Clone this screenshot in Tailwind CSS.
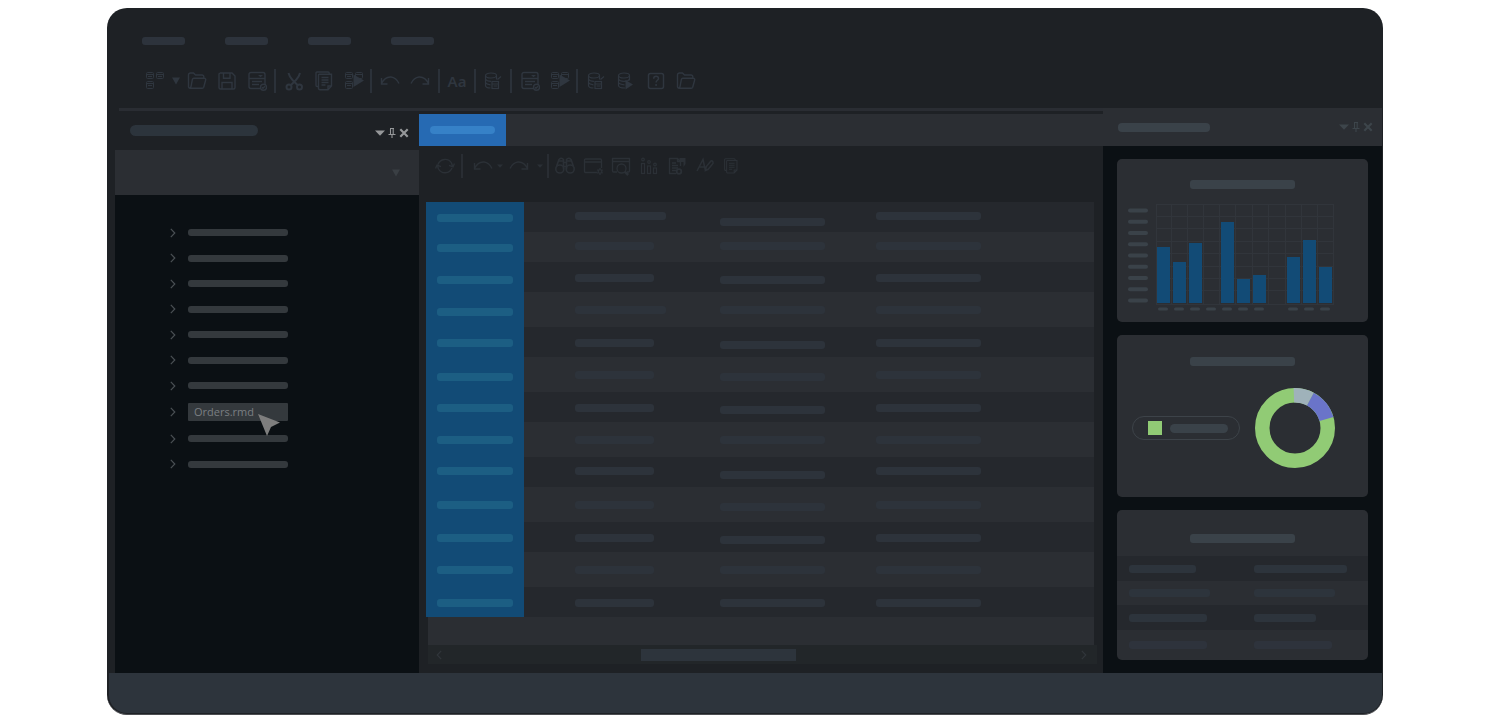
<!DOCTYPE html>
<html lang="en">
<head>
<meta charset="utf-8">
<meta name="viewport" content="width=device-width, initial-scale=1">
<title>Report designer</title>
<script src="https://cdn.jsdelivr.net/npm/@tailwindcss/browser@4"></script>
</head>
<body class="bg-white pt-2 pr-[121px] pl-[107px] font-['Noto_Sans','Open_Sans',sans-serif]">

<svg class="hidden" aria-hidden="true">
  <defs>
    <symbol id="i-tables" viewBox="0 0 20 20"><g fill="none" stroke="currentColor"><rect x="1.500" y="1.500" width="7" height="6" rx="1"/><rect x="11.500" y="1.500" width="7" height="6" rx="1"/><rect x="1.500" y="10.500" width="7" height="7" rx="1"/><path d="M1.500 3.500h7M3 5.500h4M11.500 3.500h7M13 5.500h4M1.500 12.500h7M3 14.500h4"/></g></symbol>
    <symbol id="i-folder" viewBox="0 0 20 20"><path d="M4 17.300H3a1.500 1.500 0 0 1-1.500-1.500V4A2 2 0 0 1 3.500 2h3l2 2h6.500a1.800 1.800 0 0 1 1.800 1.800V7.300M4 17.300h11.300a1.500 1.500 0 0 0 1.400-1l1.900-7a1.400 1.400 0 0 0-1.300-2H6.800a1.500 1.500 0 0 0-1.400 1.100L4 15.500a1.500 1.500 0 0 1-2 1.300" fill="none" stroke="currentColor" stroke-width="1.400"/></symbol>
    <symbol id="i-save" viewBox="0 0 20 20"><path d="M3 2h12l3 3v11.500a1.500 1.500 0 0 1-1.500 1.500h-13A1.500 1.500 0 0 1 2 16.500V3.200A1.200 1.200 0 0 1 3.200 2M6.500 2v5.200h6.500V2M5 18v-6.500h10V18" fill="none" stroke="currentColor" stroke-width="1.400"/></symbol>
    <symbol id="i-form" viewBox="0 0 20 20"><g fill="none" stroke="currentColor" stroke-width="1.400"><path d="M13 17.500H4A2 2 0 0 1 2 15.500v-12A2 2 0 0 1 4 1.500h12a2 2 0 0 1 2 2V13M2 7.500h16M5 10.500h10M5 13.500h7"/><circle cx="16.500" cy="16.300" r="3"/><path d="m15 16.300 1 1 2-2"/></g><path d="M11 4h5L13.500 6.200z" fill="currentColor"/></symbol>
    <symbol id="i-cut" viewBox="0 0 20 20"><g fill="none" stroke="currentColor" stroke-width="2"><circle cx="5" cy="16" r="2.500"/><circle cx="15.500" cy="16" r="2.500"/><path d="M4.500 2q1 4 4 7l5.500 5.500M16 2q-1 4-4 7l-5.500 5.500"/></g></symbol>
    <symbol id="i-copy" viewBox="0 0 20 20"><g fill="none" stroke="currentColor" stroke-width="1.400"><path d="M4 15.500H3.200a1.200 1.200 0 0 1-1.200-1.200V2a1 1 0 0 1 1-1h11a1.200 1.200 0 0 1 1.200 1.200V3"/><path d="M5 3.200h12.500V15L14 18.700H6A1.500 1.500 0 0 1 4.500 17V4.500A1.200 1.200 0 0 1 5 3.200M17.500 15H14v3.500M7.500 6.500h7M7.500 9h7M7.500 11.500h7M7.500 14h4"/></g></symbol>
    <symbol id="i-run" viewBox="0 0 20 20"><g fill="none" stroke="currentColor"><rect x="1.500" y="1.500" width="7" height="6" rx="1"/><rect x="11.500" y="1.500" width="7" height="6" rx="1"/><rect x="1.500" y="10.500" width="7" height="7" rx="1"/><path d="M1.500 3.500h7M3 5.500h4M1.500 12.500h7M3 14.500h4M11.500 3.500h7"/></g><path d="M9.500 3.500 20 9.500l-10.500 6.500z" fill="currentColor"/></symbol>
    <symbol id="i-undo" viewBox="0 0 20 20"><path d="M1.500 7v6h6M1.500 12.500Q5 5.500 11 6q5 .5 8 6.500" fill="none" stroke="currentColor" stroke-width="1.400"/></symbol>
    <symbol id="i-redo" viewBox="0 0 20 20"><path d="M18.500 7v6h-6M18.500 12.500Q15 5.500 9 6q-5 .5-8 6.500" fill="none" stroke="currentColor" stroke-width="1.400"/></symbol>
    <symbol id="i-dbdoc" viewBox="0 0 20 20"><g fill="none" stroke="currentColor" stroke-width="1.200"><ellipse cx="8" cy="4.500" rx="5.500" ry="2.500"/><path d="M2.500 4.500v10q0 2.500 5 2.500M2.500 8q1 2.300 5.500 2.300M2.500 11.500q1 2 5 2.300M13.500 4.500v4M14.500 8.500l3.500-3"/><rect x="9" y="10.500" width="6.500" height="7"/><path d="M9 13h6.500M10.500 15h4"/></g></symbol>
    <symbol id="i-dbplay" viewBox="0 0 20 20"><g fill="none" stroke="currentColor" stroke-width="1.200"><ellipse cx="8" cy="4.500" rx="5.500" ry="2.500"/><path d="M2.500 4.500v10q0 2.500 6.500 2.500M2.500 8q1 2.300 5.500 2.300t5.500-2.300M2.500 11.500q1 2 6 2.300M13.500 4.500v5"/></g><path d="m9.500 9 7.500 4.500-7.500 5z" fill="currentColor"/></symbol>
    <symbol id="i-help" viewBox="0 0 20 20"><g fill="none" stroke="currentColor" stroke-width="1.500"><rect x="2.500" y="2.500" width="15" height="15" rx="2"/><path d="M7.700 7.800q0-2.500 2.400-2.500t2.400 2.200c0 1.800-2.400 1.800-2.400 4M10.100 13v2"/></g></symbol>
    <symbol id="i-refresh" viewBox="0 0 20 20"><path d="M3 8.500A7.500 7.500 0 0 1 16.500 7l1 3M14 9.300l4 1.500 1.500-3.300M17 12A7.500 7.500 0 0 1 3.500 13l-1-3M6 10.700l-4-1.500-1.500 3.300" fill="none" stroke="currentColor" stroke-width="1.400"/></symbol>
    <symbol id="i-find" viewBox="0 0 20 20"><g fill="none" stroke="currentColor" stroke-width="1.600"><circle cx="4.800" cy="13" r="4"/><circle cx="15.200" cy="13" r="4"/><path d="M1.500 10.500 4 3.500q2.500-2.500 4.500 0v10M18.500 10.500 16 3.500q-2.500-2.500-4.500 0v10M8.500 6.500h3M8.500 10.500h3M4 5h4M12 5h4"/></g></symbol>
    <symbol id="i-wingear" viewBox="0 0 20 20"><g fill="none" stroke="currentColor" stroke-width="1.300"><path d="M14 16.500H2.500A1 1 0 0 1 1.500 15.500V4A1 1 0 0 1 2.500 3h15a1 1 0 0 1 1 1v8M1.500 6h17"/><circle cx="17" cy="15.500" r="1.800"/><path d="M17 12v1.500M17 17.500V19M14 13.700l1.300.8M18.700 16.500l1 .6M14 17.300l1.300-.8M18.700 14.500l1-.6"/></g></symbol>
    <symbol id="i-winfind" viewBox="0 0 20 20"><g fill="none" stroke="currentColor" stroke-width="1.300"><path d="M6 16H2.500A1 1 0 0 1 1.500 15V2.500H18.500V15a1 1 0 0 1-1 1H16M1.500 5.500h17"/><circle cx="10.500" cy="12.500" r="4.500"/></g><path d="m13.700 15.700 3.500 3.300" stroke="currentColor" stroke-width="2.500"/></symbol>
    <symbol id="i-chart" viewBox="0 0 20 20"><g fill="none" stroke="currentColor" stroke-width="1.200"><rect x="2.500" y="7.500" width="3" height="10"/><rect x="8.500" y="10" width="3" height="7.500"/><rect x="14.500" y="12" width="3" height="5.500"/><circle cx="4" cy="3.500" r="1.300"/><circle cx="10" cy="6" r="1.300"/><circle cx="16" cy="8.500" r="1.300"/></g></symbol>
    <symbol id="i-export" viewBox="0 0 20 20"><path d="M9 17.500H2.500V2.500h8l3 3V10M10.500 2.500v3h3M5 7h4M5 9.500h6M5 12h6M5 14.500h4" fill="none" stroke="currentColor" stroke-width="1.300"/><path d="M12.500 2h6v6l-2 3V6h-4z" fill="currentColor"/><circle cx="12" cy="15.500" r="2.300" fill="none" stroke="currentColor" stroke-width="1.800"/></symbol>
    <symbol id="i-style" viewBox="0 0 20 20"><path d="m2 15 6-11.500L10.500 15M4.500 11h5M10.500 14.500l.8-4L16 5q1.500-.5 2 1t-.5 2l-4.300 5.300z" fill="none" stroke="currentColor" stroke-width="1.500"/></symbol>
    <symbol id="i-pin" viewBox="0 0 8 10"><path d="M2 .5h4M2.500.5v6M5.200.5v6M.5 6.500h7M4 6.500V10" fill="none" stroke="currentColor" stroke-width="1.100"/></symbol>
    <symbol id="i-close" viewBox="0 0 10 10"><path d="m1.300 1.300 7.400 7.400M8.700 1.300 1.300 8.700" stroke="currentColor" stroke-width="2.200"/></symbol>
    <symbol id="i-down" viewBox="0 0 10 6"><path d="M0 .5h10L5 5.800z" fill="currentColor"/></symbol>
    <symbol id="i-drop" viewBox="0 0 8 8"><path d="M0 .5h8L4 7.500z" fill="currentColor"/></symbol>
    <symbol id="i-right" viewBox="0 0 6 10"><path d="m.8.800 4 4.200-4 4.200" fill="none" stroke="currentColor" stroke-width="1.200"/></symbol>
    <symbol id="i-left" viewBox="0 0 6 10"><path d="m5.200.800-4 4.200 4 4.200" fill="none" stroke="currentColor" stroke-width="1.200"/></symbol>
  </defs>
</svg>

<div class="flex flex-col overflow-hidden rounded-[20px] border-b border-[#4b4d51] bg-[#1e2125]">

  <header class="flex h-[100px] flex-col">
    <nav class="flex gap-10 pt-[29px] pl-[35px]" aria-label="Main menu">
      <a href="#" aria-label="File" class="h-2 w-[43px] rounded-[3px] bg-[#2d333c]"></a>
      <a href="#" aria-label="Edit" class="h-2 w-[43px] rounded-[3px] bg-[#2d333c]"></a>
      <a href="#" aria-label="View" class="h-2 w-[43px] rounded-[3px] bg-[#2d333c]"></a>
      <a href="#" aria-label="Help" class="h-2 w-[43px] rounded-[3px] bg-[#2d333c]"></a>
    </nav>
    <div class="mt-6 flex h-6 items-center pl-[38px] text-[#2f363f]" role="toolbar" aria-label="Standard">
      <div class="flex items-center gap-1.5">
        <button aria-label="New"><svg class="size-5"><use href="#i-tables"/></svg></button>
        <button aria-label="New options"><svg class="h-2 w-2.5"><use href="#i-drop"/></svg></button>
        <div class="flex gap-2.5 pr-[7px]">
          <button aria-label="Open"><svg class="size-5"><use href="#i-folder"/></svg></button>
          <button aria-label="Save"><svg class="size-5"><use href="#i-save"/></svg></button>
          <button aria-label="Validate"><svg class="size-5"><use href="#i-form"/></svg></button>
        </div>
      </div>
      <span class="h-6 w-0.5 bg-[#2b3139]"></span>
      <div class="flex gap-2.5 pr-1.5 pl-2">
        <button aria-label="Cut"><svg class="size-5"><use href="#i-cut"/></svg></button>
        <button aria-label="Copy"><svg class="size-5"><use href="#i-copy"/></svg></button>
        <button aria-label="Run"><svg class="size-5"><use href="#i-run"/></svg></button>
      </div>
      <span class="h-6 w-0.5 bg-[#2b3139]"></span>
      <div class="flex gap-2.5 px-2">
        <button aria-label="Undo"><svg class="size-5"><use href="#i-undo"/></svg></button>
        <button aria-label="Redo"><svg class="size-5"><use href="#i-redo"/></svg></button>
      </div>
      <span class="h-6 w-0.5 bg-[#2b3139]"></span>
      <button class="w-[34px] text-center text-[15px] leading-6 font-semibold">Aa</button>
      <span class="h-6 w-0.5 bg-[#2b3139]"></span>
      <button class="flex w-[34px] justify-center" aria-label="Data source"><svg class="size-5"><use href="#i-dbdoc"/></svg></button>
      <span class="h-6 w-0.5 bg-[#2b3139]"></span>
      <div class="flex gap-2.5 pr-1.5 pl-2">
        <button aria-label="Check form"><svg class="size-5"><use href="#i-form"/></svg></button>
        <button aria-label="Run all"><svg class="size-5"><use href="#i-run"/></svg></button>
      </div>
      <span class="h-6 w-0.5 bg-[#2b3139]"></span>
      <div class="flex gap-2.5 px-2">
        <button aria-label="Edit data"><svg class="size-5"><use href="#i-dbdoc"/></svg></button>
        <button aria-label="Run query"><svg class="size-5"><use href="#i-dbplay"/></svg></button>
        <button aria-label="Help"><svg class="size-5"><use href="#i-help"/></svg></button>
        <button aria-label="Browse"><svg class="size-5"><use href="#i-folder"/></svg></button>
      </div>
    </div>
  </header>

  <div class="flex">
    <div class="flex min-w-0 flex-1 flex-col">
      <div class="ml-3 h-[3px] bg-[#2a2d33]"></div>
      <div class="flex flex-1 pl-2">

        <aside class="flex w-[304px] flex-none flex-col">
          <div class="flex h-[39px] items-center justify-between pr-2.5 pl-[15px]">
            <div class="h-[11px] w-32 rounded-full bg-[#2c343c]"></div>
            <div class="flex items-center gap-[3px] pt-1 text-[#96989a]">
              <button aria-label="Panel menu"><svg class="h-1.5 w-2.5"><use href="#i-down"/></svg></button>
              <button aria-label="Pin panel"><svg class="h-2.5 w-2"><use href="#i-pin"/></svg></button>
              <button aria-label="Close panel"><svg class="size-2.5"><use href="#i-close"/></svg></button>
            </div>
          </div>
          <div class="relative h-[45px]">
            <select aria-label="Project" class="size-full appearance-none bg-[#2b2e33] text-[#7d8285] outline-none"><option></option></select>
            <svg class="pointer-events-none absolute top-[19px] right-[19px] size-2 text-[#3a3f44]"><use href="#i-drop"/></svg>
          </div>
          <ul id="tree" class="flex-1 bg-[#0b1014] pt-[25px] pl-[55px]"></ul>
        </aside>

        <main class="flex min-w-0 flex-1 flex-col pt-[3px]">
          <div class="flex h-8 bg-[#2b2e33]">
            <button aria-label="Document tab" class="flex w-[87px] items-center justify-center bg-[#266ab3]"><span class="h-2 w-[65px] rounded-full bg-[#3681c7]"></span></button>
          </div>
          <div class="flex h-10 items-center pl-4 text-[#2b3036]" role="toolbar" aria-label="Document">
            <button aria-label="Refresh"><svg class="size-5"><use href="#i-refresh"/></svg></button>
            <span class="mr-2.5 ml-1.5 h-6 w-0.5 bg-[#292d33]"></span>
            <div class="flex items-center gap-1">
              <button aria-label="Undo"><svg class="size-5"><use href="#i-undo"/></svg></button>
              <button aria-label="Undo list"><svg class="h-1 w-1.5"><use href="#i-down"/></svg></button>
            </div>
            <div class="ml-1.5 flex items-center gap-2">
              <button aria-label="Redo"><svg class="size-5"><use href="#i-redo"/></svg></button>
              <button aria-label="Redo list"><svg class="h-1 w-1.5"><use href="#i-down"/></svg></button>
            </div>
            <span class="mr-1.5 ml-1 h-6 w-0.5 bg-[#292d33]"></span>
            <div class="flex gap-2">
              <button aria-label="Find"><svg class="size-5"><use href="#i-find"/></svg></button>
              <button aria-label="Window settings"><svg class="size-5"><use href="#i-wingear"/></svg></button>
              <button aria-label="Preview"><svg class="size-5"><use href="#i-winfind"/></svg></button>
              <button aria-label="Statistics"><svg class="size-5"><use href="#i-chart"/></svg></button>
              <button aria-label="Export"><svg class="size-5"><use href="#i-export"/></svg></button>
              <button aria-label="Style"><svg class="size-5"><use href="#i-style"/></svg></button>
              <button aria-label="Copy"><svg class="h-5 w-4"><use href="#i-copy"/></svg></button>
            </div>
          </div>

          <div class="mt-4 mr-[9px] ml-[7px]">
            <table class="w-full table-fixed border-collapse" aria-label="Records">
              <colgroup><col class="w-[98px]"><col class="w-[145px]"><col class="w-[156px]"><col></colgroup>
              <tbody id="records"></tbody>
            </table>
            <div class="ml-0.5 h-7 bg-[#2b2e33]"></div>
          </div>
          <div class="mr-1.5 mb-[9px] ml-[9px] flex h-[19px] items-center bg-[#222629] px-2 text-[#31363b]">
            <button aria-label="Scroll left"><svg class="h-2.5 w-1.5"><use href="#i-left"/></svg></button>
            <div class="flex flex-1 justify-center pr-[86px]"><div class="h-3 w-[155px] bg-[#2d343c]"></div></div>
            <button class="mr-0.5" aria-label="Scroll right"><svg class="h-2.5 w-1.5"><use href="#i-right"/></svg></button>
          </div>
        </main>
      </div>
    </div>

    <aside class="mr-px flex w-[279px] flex-none flex-col bg-[#0b1014]">
      <div class="flex h-[38px] items-center justify-between bg-[#2b2e33] pr-[9px] pl-[15px]">
        <div class="h-[9px] w-[92px] rounded-[4px] bg-[#3a4249]"></div>
        <div class="flex items-center gap-[3px] text-[#3d454b]">
          <button aria-label="Panel menu"><svg class="h-1.5 w-2.5"><use href="#i-down"/></svg></button>
          <button aria-label="Pin panel"><svg class="h-2.5 w-2"><use href="#i-pin"/></svg></button>
          <button aria-label="Close panel"><svg class="size-2.5"><use href="#i-close"/></svg></button>
        </div>
      </div>
      <div class="flex flex-1 flex-col gap-[13px] px-3.5 py-[13px]">

        <section class="flex h-[163px] flex-col items-center rounded-[5px] bg-[#2b2e33] pt-[21px]">
          <div class="h-[9px] w-[105px] rounded-[3px] bg-[#3a4249]"></div>
          <svg id="bars" class="mt-3.5 h-[110px] w-[251px]" viewBox="0 0 251 110" role="img" aria-label="Bar chart"></svg>
        </section>

        <section class="flex h-[162px] flex-col items-center rounded-[5px] bg-[#2b2e33] pt-[22px]">
          <div class="h-[9px] w-[105px] rounded-[3px] bg-[#3a4249]"></div>
          <div class="mt-[22px] flex w-full items-center gap-[15px] pl-[15px]">
            <div class="flex h-6 w-[108px] items-center gap-2 rounded-full border border-[#3d4349] pl-[15px]">
              <span class="size-3.5 bg-[#91cb75]"></span>
              <span class="h-[9px] w-[58px] rounded-full bg-[#3a4249]"></span>
            </div>
            <svg class="size-20" viewBox="0 0 80 80" role="img" aria-label="Donut chart">
              <g fill="none" stroke-width="14.500" transform="rotate(-90 40 40)">
                <circle cx="40" cy="40" r="32.750" pathLength="360" stroke="#91cb75"/>
                <circle cx="40" cy="40" r="32.750" pathLength="360" stroke="#9fb2ba" stroke-dasharray="30 330" stroke-dashoffset="2"/>
                <circle cx="40" cy="40" r="32.750" pathLength="360" stroke="#6a74c9" stroke-dasharray="46 314" stroke-dashoffset="-28"/>
              </g>
            </svg>
          </div>
        </section>

        <section class="flex flex-col items-center overflow-hidden rounded-[5px] bg-[#2b2e33]">
          <div class="flex h-[46px] items-center pt-2.5"><div class="h-[9px] w-[105px] rounded-[3px] bg-[#3a4249]"></div></div>
          <table class="w-full table-fixed border-collapse" aria-label="Summary">
            <tbody>
              <tr class="h-[25px] bg-[#25282d]"><td class="pl-3"><div class="h-2 w-[67px] rounded-[3px] bg-[#2d343c]"></div></td><td class="pl-[11px]"><div class="h-2 w-[93px] rounded-[3px] bg-[#2d343c]"></div></td></tr>
              <tr class="h-6"><td class="pl-3"><div class="h-2 w-[81px] rounded-[3px] bg-[#2d343c]"></div></td><td class="pl-[11px]"><div class="h-2 w-[81px] rounded-[3px] bg-[#2d343c]"></div></td></tr>
              <tr class="h-[25px] bg-[#25282d]"><td class="pl-3"><div class="h-2 w-[78px] rounded-[3px] bg-[#2d343c]"></div></td><td class="pl-[11px]"><div class="h-2 w-[62px] rounded-[3px] bg-[#2d343c]"></div></td></tr>
              <tr class="h-[30px]"><td class="pl-3"><div class="h-2 w-[78px] rounded-[3px] bg-[#2e333c]"></div></td><td class="pl-[11px]"><div class="h-2 w-[78px] rounded-[3px] bg-[#2e333c]"></div></td></tr>
            </tbody>
          </table>
        </section>
      </div>
    </aside>
  </div>

  <footer class="mr-px mb-px ml-0.5 h-10 rounded-b-[18px] bg-[#2d343c]"></footer>
</div>

<script>
  // File tree: one row is selected and carries the pointer.
  const selected = 7;
  document.getElementById('tree').innerHTML = Array.from({ length: 10 }, (_, i) => i === selected
    ? `<li class="flex h-7 items-center gap-3 text-[#4a5054]"><svg class="h-2.5 w-1.5"><use href="#i-right"/></svg>
        <a href="#" class="relative flex h-[18px] w-[100px] items-center rounded-[1px] bg-[#34393d] pl-1.5 font-['Open_Sans','Noto_Sans',sans-serif] text-[11px] leading-4 text-[#7b7f82]">Orders.rmd<svg class="absolute top-2.5 left-[69px] h-6 w-6" viewBox="0 0 24 24"><path d="M1 1 23 9.500 14 14 10 23z" fill="#7e7e7e"/></svg></a></li>`
    : `<li class="flex h-[25px] items-center gap-3 text-[#4a5054] even:h-[26px]"><svg class="h-2.5 w-1.5"><use href="#i-right"/></svg>
        <a href="#" aria-label="Item ${i + 1}" class="h-[7px] w-[100px] rounded-[3px] bg-[#34393d]"></a></li>`).join('');

  // Record rows: top padding of each cell, then the row height follows the stripe.
  const a = 'pt-2.5', b = 'pt-3', c = 'pt-3.5', d = 'pt-4';
  const rows = [
    [b, a, d], [b, a, a], [c, b, c], [d, c, c], [b, b, c], [d, c, d], [b, b, c],
    [c, c, c], [a, a, c], [c, c, d], [b, b, c], [c, c, c], [b, b, b]
  ];
  document.getElementById('records').innerHTML = rows.map(([p, q, r], i) => {
    const tall = i > 2 && i % 2 === 1;
    const wide = i === 0 || i === 3;
    return `<tr class="${tall ? 'h-[35px]' : 'h-[30px]'} ${i % 2 ? 'bg-[#2b2e33]' : 'bg-[#25282d]'}">
      <td class="bg-[#124b76] pl-[11px] align-top ${p}"><div class="h-2 w-[76px] rounded-[3px] bg-[#1c5e83]"></div></td>
      <td class="pl-[51px] align-top ${q}"><div class="h-2 rounded-[3px] bg-[#2d333b] ${wide ? 'w-[91px]' : 'w-[79px]'}"></div></td>
      <td class="pl-[51px] align-top ${r}"><div class="h-2 w-[105px] rounded-[3px] bg-[#2d333b]"></div></td>
      <td class="pl-[51px] align-top ${q}"><div class="h-2 w-[105px] rounded-[3px] bg-[#2d333b]"></div></td></tr>`;
  }).join('');

  // Bar chart: x position and height of each bar; the baseline is y = 100.
  const bars = [[40, 56], [56, 41], [72, 60], [104, 81], [120, 24], [136, 28], [170, 46], [186, 63], [202, 36]];
  const vertical = [39, 54, 70, 86, 102, 118, 135, 151, 168, 184, 200, 216];
  const horizontal = [1, 13, 25, 38, 50, 63, 75, 87, 101];
  document.getElementById('bars').innerHTML =
    vertical.map(x => `<path d="M${x + .5} 1v100" stroke="#31353b"/>`).join('') +
    horizontal.map(y => `<path d="M39 ${y + .5}h178" stroke="#31353b"/>`).join('') +
    horizontal.map((_, i) => `<rect x="11" y="${5.5 + i * 11.25}" width="20" height="4" rx="2" fill="#3a4249"/>`).join('') +
    bars.map(([x, h]) => `<rect x="${x}" y="${100 - h}" width="13" height="${h}" fill="#124b76"/>`).join('') +
    [...bars.map(v => v[0]), 88].map(x => `<rect x="${x + 1}" y="104.500" width="10" height="3" rx="1.500" fill="#3a4249"/>`).join('');
</script>
</body>
</html>
